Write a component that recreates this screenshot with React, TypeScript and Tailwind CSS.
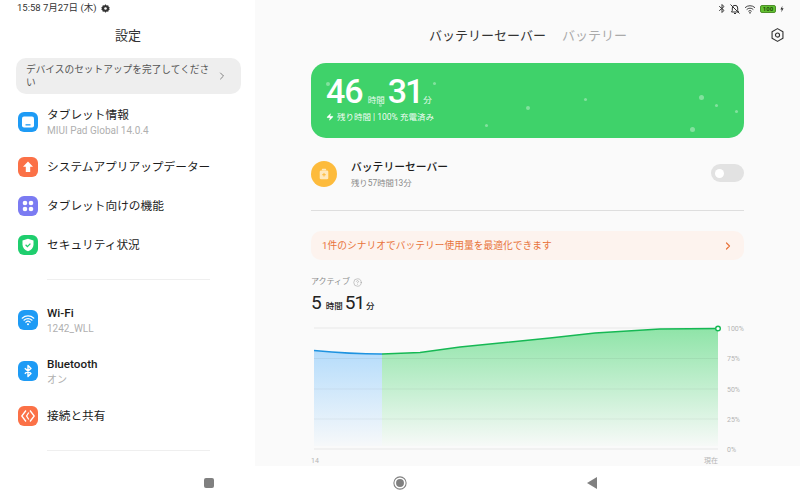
import React from 'react';
import { ChevronRight, Zap, HelpCircle } from 'lucide-react';

const FONT = "font-['Roboto','Noto_Sans_CJK_JP',sans-serif]";

function IconBox({ color, children }: { color: string; children: React.ReactNode }) {
  return (
    <div className={`w-5 h-5 rounded-[6px] flex items-center justify-center shrink-0 ${color}`}>
      <svg viewBox="0 0 20 20" className="w-5 h-5">
        {children}
      </svg>
    </div>
  );
}

function MenuRow({
  icon,
  title,
  sub,
  className,
  latin,
}: {
  icon: React.ReactNode;
  title: string;
  sub?: string;
  className: string;
  latin?: boolean;
}) {
  return (
    <div className={`flex items-center gap-[9px] pl-[18px] ${className}`}>
      {icon}
      <div className="flex flex-col">
        <span className={`text-[11.7px] leading-[17px] text-[#1c1c1c] whitespace-nowrap ${latin ? 'font-medium' : ''}`}>{title}</span>
        {sub && <span className="text-[10px] leading-[14px] text-[#b0b0b0] whitespace-nowrap">{sub}</span>}
      </div>
    </div>
  );
}

function Sidebar() {
  return (
    <div className="w-[255px] h-[466px] shrink-0 bg-white flex flex-col overflow-hidden">
      <div className="h-[17px] pl-[17px] flex items-center gap-[4px] text-[9.5px] text-[#333]">
        <span className="whitespace-nowrap">15:58 7月27日 (木)</span>
        <svg viewBox="0 0 12 12" className="w-[9px] h-[9px] ml-[1px]">
          <path d="M6 .3l1.500 1.600 2.100-.3.6 2.100 1.500 1.100-.9 1.200.9 1.200-1.500 1.100-.6 2.100-2.100-.3L6 11.700l-1.500-1.600-2.100.3-.6-2.100L.3 7.200 1.200 6 .3 4.800l1.500-1.100.6-2.100 2.100.3z" fill="#333" />
          <circle cx="6" cy="6" r="1.700" fill="#fff" />
        </svg>
      </div>
      <div className="mt-[10px] h-[18px] pl-[1px] text-center text-[13px] leading-[18px] text-[#333]">設定</div>
      <div className="mt-[13px] mx-4 w-[225px] h-[36px] shrink-0 rounded-[10px] bg-[#eeeeee] flex items-center pl-[10px] pr-[13px]">
        <span className="w-[190px] text-[9.7px] leading-[13px] text-[#555] break-all">デバイスのセットアップを完了してください</span>
        <ChevronRight className="w-3 h-3 ml-auto text-[#666]" strokeWidth={1.6} />
      </div>
      <MenuRow
        className="mt-[13px] h-[30px]"
        title="タブレット情報"
        sub="MIUI Pad Global 14.0.4"
        icon={
          <IconBox color="bg-[#1e9bf5]">
            <rect x="4" y="4.500" width="12" height="11" rx="2" fill="#fff" />
            <rect x="7.500" y="12.200" width="5" height="1.300" fill="#1e9bf5" />
          </IconBox>
        }
      />
      <MenuRow
        className="mt-[20px] h-[20px]"
        title="システムアプリアップデーター"
        icon={
          <IconBox color="bg-[#fb7147]">
            <path d="M10 4.500l5 5.200h-2.800v5.300H7.800V9.700H5z" fill="#fff" />
          </IconBox>
        }
      />
      <MenuRow
        className="mt-[19px] h-[20px]"
        title="タブレット向けの機能"
        icon={
          <IconBox color="bg-[#7b7bf2]">
            <circle cx="7" cy="7" r="2.300" fill="#fff" />
            <circle cx="13" cy="7" r="2.300" fill="#fff" />
            <circle cx="7" cy="13" r="2.300" fill="#fff" />
            <circle cx="13" cy="13" r="2.300" fill="#fff" />
          </IconBox>
        }
      />
      <MenuRow
        className="mt-[19px] h-[20px]"
        title="セキュリティ状況"
        icon={
          <IconBox color="bg-[#1fce6e]">
            <path d="M10 3.800l5.500 1.700v4.200c0 3-2.300 5.300-5.500 6.500-3.200-1.200-5.500-3.500-5.500-6.500V5.500z" fill="#fff" />
            <path d="M7.600 9.800l1.800 1.800 3-3" fill="none" stroke="#1fce6e" strokeWidth="1.300" />
          </IconBox>
        }
      />
      <div className="mt-[24px] ml-[47px] w-[163px] h-px shrink-0 bg-[#efefef]" />
      <MenuRow
        className="mt-[24px] h-[32px]"
        title="Wi-Fi"
        sub="1242_WLL"
        latin
        icon={
          <IconBox color="bg-[#1e9bf5]">
            <path d="M4.200 8.200a8.400 8.400 0 0 1 11.600 0M6 10.200a5.800 5.800 0 0 1 8 0M7.800 12.200a3.200 3.200 0 0 1 4.400 0" fill="none" stroke="#fff" strokeWidth="1.200" strokeLinecap="round" />
            <circle cx="10" cy="14.200" r="1" fill="#fff" />
          </IconBox>
        }
      />
      <MenuRow
        className="mt-[19px] h-[32px]"
        title="Bluetooth"
        sub="オン"
        latin
        icon={
          <IconBox color="bg-[#1e9bf5]">
            <path d="M6.800 7.200l6.200 5.400-3 2.900V4.500l3 2.900-6.200 5.400" fill="none" stroke="#fff" strokeWidth="1.400" strokeLinejoin="round" />
          </IconBox>
        }
      />
      <MenuRow
        className="mt-[19px] h-[20px]"
        title="接続と共有"
        icon={
          <IconBox color="bg-[#fb7147]">
            <path d="M8 4.500L3.800 10 8 15.500M12 4.500L16.200 10 12 15.500" fill="none" stroke="#fff" strokeWidth="1.300" strokeLinejoin="round" />
            <path d="M10.800 6.500L8.600 10l2.200 3.500" fill="none" stroke="#fff" strokeWidth="1.300" />
          </IconBox>
        }
      />
      <div className="mt-[24px] ml-[47px] w-[163px] h-px shrink-0 bg-[#efefef]" />
    </div>
  );
}

function StatusIcons() {
  return (
    <div className="h-[17px] flex items-center justify-end gap-[3px] pr-[16px]">
      <svg viewBox="0 0 10 12" className="w-[8px] h-[11px]">
        <path d="M1.500 3.200l6 5.200L5 11V1l2.500 2.600L1.500 8.800" fill="none" stroke="#333" strokeWidth="1.200" />
      </svg>
      <svg viewBox="0 0 12 12" className="w-[12px] h-[12px]">
        <path d="M2.500 9h7L8.700 7.500V5a2.700 2.700 0 0 0-5.400 0v2.500zM5 10.500h2M1.500 1.500l9 9" fill="none" stroke="#333" strokeWidth="1" />
      </svg>
      <svg viewBox="0 0 14 12" className="w-[12px] h-[10px]">
        <path d="M1 4.500a8.600 8.600 0 0 1 12 0M3 6.700a5.600 5.600 0 0 1 8 0M5 8.800a2.800 2.800 0 0 1 4 0" fill="none" stroke="#333" strokeWidth="1.100" />
        <circle cx="7" cy="10.600" r="1" fill="#333" />
      </svg>
      <div className="w-[16px] h-[8px] ml-[1px] rounded-[2px] bg-[#63c132] border border-[#4d8f2a] text-[6px] leading-[6px] font-bold text-[#1d4d08] text-center">100</div>
      <svg viewBox="0 0 6 10" className="w-[4px] h-[8px] ml-[1px]">
        <path d="M3.600 0L.6 5.600h2L2 10l3.400-6H3.200z" fill="#333" />
      </svg>
    </div>
  );
}

function HeroCard() {
  const dots = [
    ['left-[15px]', 'top-[19px]', 'w-[4px] h-[4px]'],
    ['left-[122px]', 'top-[19px]', 'w-[3px] h-[3px]'],
    ['left-[68px]', 'top-[41px]', 'w-[3px] h-[3px]'],
    ['left-[215px]', 'top-[43px]', 'w-[4px] h-[4px]'],
    ['left-[174px]', 'top-[61px]', 'w-[3px] h-[3px]'],
    ['left-[273px]', 'top-[35px]', 'w-[3px] h-[3px]'],
    ['left-[388px]', 'top-[32px]', 'w-[5px] h-[5px]'],
    ['left-[404px]', 'top-[41px]', 'w-[3px] h-[3px]'],
    ['left-[424px]', 'top-[47px]', 'w-[3px] h-[3px]'],
    ['left-[379px]', 'top-[64px]', 'w-[5px] h-[5px]'],
  ];
  return (
    <div className="relative h-[75px] rounded-[15px] bg-[#3fd26a] text-white pl-[15px] pt-[12px] overflow-hidden">
      {dots.map((d, i) => (
        <span key={i} className={`absolute rounded-full bg-white/35 ${d[0]} ${d[1]} ${d[2]}`} />
      ))}
      <div className="flex items-baseline h-[33px]">
        <span className="text-[34px] leading-[33px] font-medium tracking-[-1px]">46</span>
        <span className="text-[8.5px] ml-[5px] text-white/90">時間</span>
        <span className="text-[34px] leading-[33px] font-medium tracking-[-2px] ml-[3px]">31</span>
        <span className="text-[8.5px] ml-[1px] text-white/90">分</span>
      </div>
      <div className="mt-[2px] flex items-center gap-[3px] text-[8.5px] leading-[14px] text-white/95">
        <Zap className="w-[8px] h-[8px] fill-white" strokeWidth={1} />
        <span>残り時間 | 100% 充電済み</span>
      </div>
    </div>
  );
}

function SaverRow() {
  return (
    <div className="mt-[22px] h-[28px] flex items-center">
      <div className="w-[26px] h-[26px] rounded-full bg-[#fdbb3c] flex items-center justify-center">
        <svg viewBox="0 0 14 16" className="w-[10px] h-[12px]">
          <rect x="4" y="0.500" width="6" height="2.500" rx="0.800" fill="#ffe9bd" />
          <rect x="1" y="3" width="12" height="12.500" rx="2" fill="#ffe9bd" />
          <path d="M7 6.500v5M4.500 9h5" stroke="#fdbb3c" strokeWidth="1.400" />
        </svg>
      </div>
      <div className="ml-[14px] flex flex-col">
        <span className="text-[10.8px] leading-[16px] font-medium text-[#1c1c1c] mt-[1px]">バッテリーセーバー</span>
        <span className="text-[8.4px] leading-[13px] mt-[1px] text-[#8a8a8a]">残り57時間13分</span>
      </div>
      <div className="ml-auto w-[33px] h-[18px] rounded-full bg-[#e2e2e2] flex items-center pl-[4px] -translate-y-[1px]">
        <span className="w-[9px] h-[9px] rounded-full bg-white" />
      </div>
    </div>
  );
}

function Chart() {
  const blueFill = 'M314 350.5 C340 353 360 354 382 354 V446 H314 Z';
  const greenFill = 'M382 354 L420 352.5 L460 347 L500 343 L550 338 L595 333 L660 329 L718 328.5 V446 H382 Z';
  const ys = [328, 358.5, 389, 419, 449];
  const labels = ['100%', '75%', '50%', '25%', '0%'];
  return (
    <svg viewBox="311 322 434 144" className="mt-[8px] w-[434px] h-[144px] block">
      <defs>
        <linearGradient id="gb" x1="0" y1="0" x2="0" y2="1">
          <stop offset="0" stopColor="#b5dcfb" />
          <stop offset="1" stopColor="#b5dcfb" stopOpacity="0.05" />
        </linearGradient>
        <linearGradient id="gg" x1="0" y1="0" x2="0" y2="1">
          <stop offset="0" stopColor="#8fe4a8" />
          <stop offset="1" stopColor="#8fe4a8" stopOpacity="0.03" />
        </linearGradient>
      </defs>
      <path d={blueFill} fill="url(#gb)" />
      <path d={greenFill} fill="url(#gg)" />
      {ys.map((y, i) => (
        <line key={y} x1="314" x2="718" y1={y} y2={y} stroke="#000" strokeOpacity={i === 0 || i === 4 ? 0.07 : 0.05} />
      ))}
      <path d="M314 350.5 C340 353 360 354 382 354" fill="none" stroke="#1f93e0" strokeWidth="1.400" />
      <path d="M382 354 L420 352.5 L460 347 L500 343 L550 338 L595 333 L660 329 L718 328.5" fill="none" stroke="#16b854" strokeWidth="1.400" />
      <circle cx="718" cy="328.5" r="2.300" fill="#fff" stroke="#16b854" strokeWidth="1.400" />
      {labels.map((l, i) => (
        <text key={l} x="727" y={ys[i] + 2.5} fontSize="7" fill="#b5b5b5">
          {l}
        </text>
      ))}
      <text x="311" y="462.5" fontSize="7" fill="#b5b5b5">14</text>
      <text x="718" y="462.5" fontSize="7" fill="#b5b5b5" textAnchor="end">現在</text>
    </svg>
  );
}

function BatteryPanel() {
  return (
    <div className="flex-1 h-[466px] bg-[#fafafa] overflow-hidden">
      <StatusIcons />
      <div className="relative h-[38px] flex items-center justify-center gap-[16px] pl-[1px]">
        <span className="text-[13px] text-[#333]">バッテリーセーバー</span>
        <span className="text-[13px] text-[#aaaaaa]">バッテリー</span>
        <svg viewBox="0 0 16 16" className="absolute right-[15px] top-[10px] w-[15px] h-[16px]">
          <path d="M8 1.200l5.800 3.400v6.800L8 14.800l-5.800-3.400V4.600z" fill="none" stroke="#333" strokeWidth="1.200" strokeLinejoin="round" />
          <circle cx="8" cy="8" r="2.200" fill="none" stroke="#333" strokeWidth="1.200" />
        </svg>
      </div>
      <div className="mt-[8px] ml-[56px] w-[433px]">
        <HeroCard />
        <SaverRow />
        <div className="mt-[22px] h-px bg-[#dedede]" />
        <div className="mt-[20px] h-[29px] rounded-[10px] bg-[#fdf3ee] flex items-center pl-[11px] pr-[10px]">
          <span className="text-[9.75px] pt-[1px] text-[#e8743b]">1件のシナリオでバッテリー使用量を最適化できます</span>
          <ChevronRight className="w-3 h-3 ml-auto text-[#e8743b]" strokeWidth={2.4} />
        </div>
        <div className="mt-[15px] h-[14px] flex items-center gap-[3px] text-[8px] text-[#8c8c8c]">
          <span>アクティブ</span>
          <HelpCircle className="w-[9px] h-[9px] text-[#999]" strokeWidth={1.4} />
        </div>
        <div className="mt-[3px] h-[22px] flex items-baseline text-[#222]">
          <span className="text-[19px] leading-[22px]">5</span>
          <span className="text-[8.5px] ml-[4px] font-medium">時間</span>
          <span className="text-[19px] leading-[22px] ml-[2px] tracking-[-1px]">51</span>
          <span className="text-[8.5px] ml-[2px] font-medium">分</span>
        </div>
        <Chart />
      </div>
    </div>
  );
}

function NavBar() {
  return (
    <div className="h-[34px] bg-white flex items-center">
      <div className="ml-[204px] w-[10px] h-[10px] rounded-[2px] bg-[#808080]" />
      <svg viewBox="0 0 16 16" className="ml-[179px] w-[14px] h-[14px]">
        <circle cx="8" cy="8" r="7" fill="none" stroke="#808080" strokeWidth="1.200" />
        <circle cx="8" cy="8" r="4.500" fill="#808080" />
      </svg>
      <svg viewBox="0 0 10 12" className="ml-[180px] w-[10px] h-[12px]">
        <path d="M10 0v12L0 6z" fill="#808080" />
      </svg>
    </div>
  );
}

export default function App() {
  return (
    <div className={`w-[800px] h-[500px] overflow-hidden bg-white ${FONT}`}>
      <div className="flex h-[466px]">
        <Sidebar />
        <BatteryPanel />
      </div>
      <NavBar />
    </div>
  );
}
